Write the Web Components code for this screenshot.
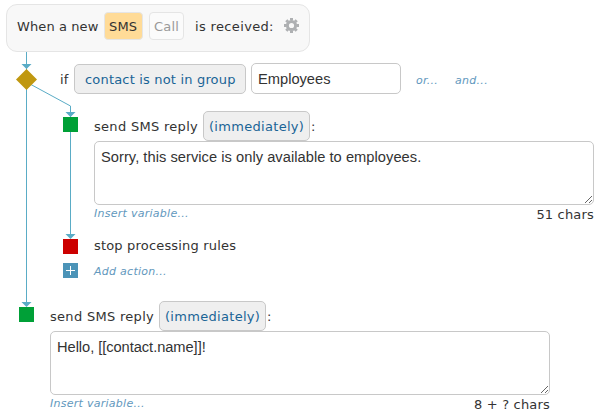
<!DOCTYPE html>
<html lang="en">
<head>
<meta charset="utf-8">
<title>Rules</title>
<style>
    body {
        margin: 0;
        background: #fff;
        color: #333;
        font: 13px/16px "DejaVu Sans", Verdana, sans-serif;
        letter-spacing: 0.18px;
    }
</style>
</head>
<body>
<rule-editor></rule-editor>
<script>
class RuleToggle extends HTMLElement {
    constructor() {
        super();
        this.attachShadow({ mode: 'open' });
        this.shadowRoot.innerHTML = `
            <style>
                :host {
                    display: block;
                    box-sizing: border-box;
                    height: 28px;
                    padding: 6px 4px 4px;
                    border: 1px solid #e5e5e5;
                    border-radius: 4px;
                    background: #fbfbfb;
                    color: #999;
                    white-space: nowrap;
                }
                :host([selected]) {
                    background: #ffdb97;
                    color: #333;
                }
            </style>
            <slot></slot>
        `;
    }
}

class RuleHeader extends HTMLElement {
    constructor() {
        super();
        this.attachShadow({ mode: 'open' });
        this.shadowRoot.innerHTML = `
            <style>
                :host {
                    display: flex;
                    box-sizing: border-box;
                    width: 304px;
                    height: 48px;
                    margin-left: 6px;
                    padding: 7px 0 0 10px;
                    border: 1px solid #e5e5e5;
                    border-radius: 11px;
                    background: #f8f8f8;
                    white-space: nowrap;
                }
                .lead { width: 87px; padding-top: 7px; letter-spacing: 0.1px; }
                rule-toggle { width: 39px; margin-right: 6px; }
                rule-toggle + rule-toggle { width: 35px; margin-right: 11px; }
                .tail { width: 89px; padding-top: 7px; letter-spacing: 0.35px; }
                svg { margin-top: 6px; }
            </style>
            <span class="lead">When a new</span>
            <rule-toggle selected>SMS</rule-toggle>
            <rule-toggle>Call</rule-toggle>
            <span class="tail">is received:</span>
            <svg width="15" height="15" viewBox="-7.5 -7.5 15 15" fill="none" stroke="#aeb0b2">
                <circle r="4.1" stroke-width="3"/>
                <path d="M0-7.5V-5M0 5V7.5M-7.5 0H-5M5 0H7.5M-5.2-5.2L-3.7-3.7M3.7 3.7L5.2 5.2M-5.2 5.2L-3.7 3.7M3.7-3.7L5.2-5.2" stroke-width="3"/>
            </svg>
        `;
    }
}

class RulePicker extends HTMLElement {
    constructor() {
        super();
        this.attachShadow({ mode: 'open' });
        this.shadowRoot.innerHTML = `
            <style>
                :host {
                    display: block;
                    flex: none;
                    box-sizing: border-box;
                    height: 30px;
                    padding: 7px 0 0 var(--picker-pad, 5px);
                    border: 1px solid #c8c8c8;
                    border-radius: 5px;
                    background: #efefef;
                    color: #1a6496;
                    white-space: nowrap;
                }
            </style>
            <slot></slot>
        `;
    }
}

class RuleLink extends HTMLElement {
    constructor() {
        super();
        this.attachShadow({ mode: 'open' });
        this.shadowRoot.innerHTML = `
            <style>
                :host {
                    display: block;
                    color: #6298bd;
                    font-size: 11px;
                    font-style: italic;
                    letter-spacing: 0.27px;
                    white-space: nowrap;
                }
            </style>
            <slot></slot>
        `;
    }
}

class RuleField extends HTMLElement {
    constructor() {
        super();
        this.attachShadow({ mode: 'open' });
        const grip = this.hasAttribute('multiline')
            ? '<svg width="9" height="9" viewBox="0 0 9 9"><path d="M1 8L8 1M5 8L8 5" stroke="#666" fill="none"/></svg>'
            : '';
        this.shadowRoot.innerHTML = `
            <style>
                :host {
                    display: block;
                    position: relative;
                    box-sizing: border-box;
                    width: 150px;
                    height: 31px;
                    padding: 6px;
                    border: 1px solid #c8c8c8;
                    border-radius: 5px;
                    background: #fff;
                    font: 14.67px/18px "Liberation Sans", Arial, sans-serif;
                    letter-spacing: 0;
                    white-space: nowrap;
                }
                :host([multiline]) {
                    width: 500px;
                    height: 64px;
                    letter-spacing: var(--message-spacing, 0.04px);
                }
                svg { position: absolute; right: 0; bottom: 0; }
            </style>
            <slot></slot>${grip}
        `;
    }
}

class SmsReply extends HTMLElement {
    constructor() {
        super();
        this.attachShadow({ mode: 'open' });
        this.shadowRoot.innerHTML = `
            <style>
                :host { display: block; width: 500px; }
                .title { display: flex; height: 30px; letter-spacing: 0.3px; }
                .title span { padding-top: 8px; white-space: nowrap; }
                .name { width: 109px; }
                rule-picker { width: 107px; margin-right: 1px; }
                .foot { display: flex; justify-content: space-between; }
                .foot rule-link { padding-top: 1px; }
                .count { padding-top: 2px; }
            </style>
            <div class="title">
                <span class="name">send SMS reply</span>
                <rule-picker>(immediately)</rule-picker>
                <span>:</span>
            </div>
            <rule-field multiline><slot></slot></rule-field>
            <div class="foot">
                <rule-link>Insert variable...</rule-link>
                <span class="count">${this.getAttribute('count')}</span>
            </div>
        `;
    }
}

// Arrows and node markers drawn alongside the rule rows
class RuleConnectors extends HTMLElement {
    constructor() {
        super();
        this.attachShadow({ mode: 'open' });
        this.shadowRoot.innerHTML = `
            <style>
                :host { position: absolute; left: 0; top: 0; pointer-events: none; }
                svg { display: block; }
            </style>
            <svg width="90" height="417" viewBox="0 0 90 417">
                <g fill="none" stroke="#5aacc6">
                    <path d="M26.5 52V303M70.5 113V118M70.5 132V236M70.5 113V106L30 84"/>
                </g>
                <g fill="#5aacc6">
                    <path d="M21.5 64H31.5L26.5 69ZM21.5 302H31.5L26.5 307ZM65.5 112H75.5L70.5 117ZM65.5 234H75.5L70.5 239Z"/>
                </g>
                <path d="M26.5 69L37 79.5L26.5 90L16 79.5Z" fill="#c09810"/>
                <path d="M63 117h15v15h-15zM19 307h15v15h-15z" fill="#00a037"/>
                <path d="M63 239h15v15h-15z" fill="#cc0000"/>
                <path d="M63 263h15v15h-15z" fill="#4c94b8"/>
                <path d="M66 270.5H75M70.5 266V275" stroke="#fff"/>
            </svg>
        `;
    }
}

class RuleEditor extends HTMLElement {
    constructor() {
        super();
        this.attachShadow({ mode: 'open' });
        this.shadowRoot.innerHTML = `
            <style>
                :host {
                    display: block;
                    position: relative;
                    box-sizing: border-box;
                    width: 602px;
                    height: 417px;
                    padding-top: 4px;
                    overflow: hidden;
                }
                .condition {
                    display: flex;
                    align-items: flex-end;
                    height: 42px;
                    margin-bottom: 17px;
                    padding-left: 60px;
                }
                .if { width: 14px; padding-bottom: 6px; }
                .condition rule-picker {
                    --picker-pad: 10px;
                    width: 172px;
                    margin-right: 5px;
                }
                .condition rule-link { margin-left: 15px; padding-bottom: 5px; }
                .condition rule-link + rule-link { margin-left: 17px; }
                .nested { height: 190px; padding-left: 94px; }
                .stop { margin-top: 15px; }
                .add { margin-top: 10px; }
                .last { margin-left: 50px; --message-spacing: -0.05px; }
            </style>
            <rule-header></rule-header>
            <div class="condition">
                <span class="if">if</span>
                <rule-picker>contact is not in group</rule-picker>
                <rule-field>Employees</rule-field>
                <rule-link>or...</rule-link>
                <rule-link>and...</rule-link>
            </div>
            <div class="nested">
                <sms-reply count="51 chars">Sorry, this service is only available to employees.</sms-reply>
                <div class="stop">stop processing rules</div>
                <rule-link class="add">Add action...</rule-link>
            </div>
            <sms-reply class="last" count="8 + ? chars">Hello, [[contact.name]]!</sms-reply>
            <rule-connectors></rule-connectors>
        `;
    }
}

customElements.define('rule-toggle', RuleToggle);
customElements.define('rule-header', RuleHeader);
customElements.define('rule-picker', RulePicker);
customElements.define('rule-link', RuleLink);
customElements.define('rule-field', RuleField);
customElements.define('sms-reply', SmsReply);
customElements.define('rule-connectors', RuleConnectors);
customElements.define('rule-editor', RuleEditor);
</script>
</body>
</html>
